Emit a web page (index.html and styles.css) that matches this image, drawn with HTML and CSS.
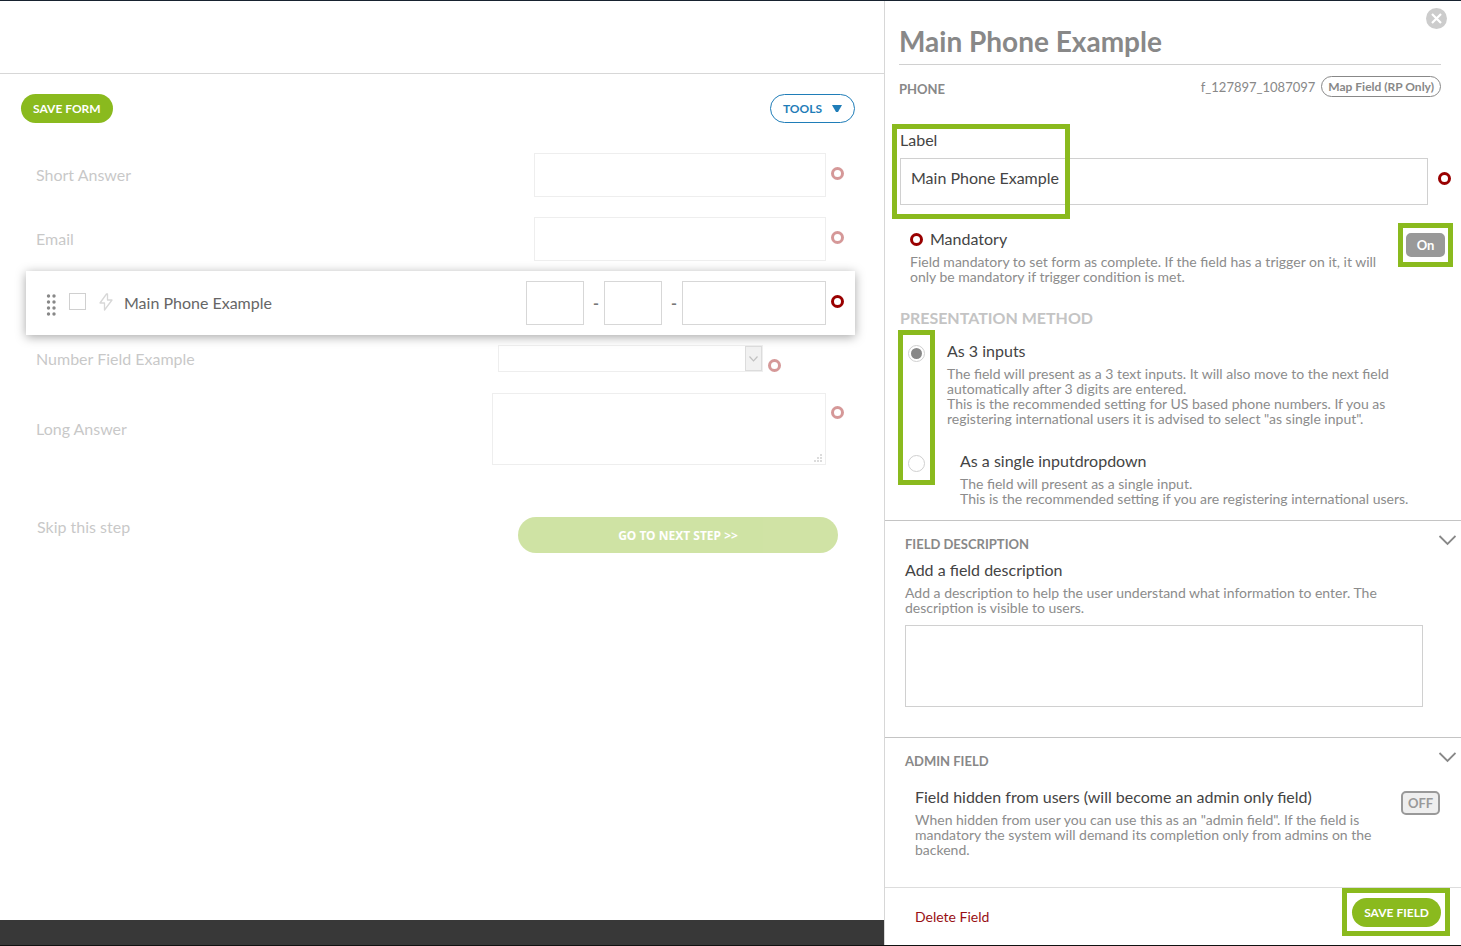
FILE: index.html
```html
<!DOCTYPE html>
<html lang="en">

<head>
    <meta charset="utf-8">
    <title>Form Builder</title>
    <link rel="stylesheet" href="styles.css">
</head>
<body>
    <div class="layout">
        <main class="builder">
            <header class="top-bar"></header>

            <div class="toolbar">
                <button type="button" class="btn-green">SAVE FORM</button>
                <button type="button" class="btn-tools">TOOLS
                    <svg width="10" height="7" viewBox="0 0 10 7"><path d="M0 0h10L6 7H4z" fill="#1f7db8"/></svg>
                </button>
            </div>

            <form class="fields">
                <div class="row faded">
                    <label for="shortAnswer">Short Answer</label>
                    <input type="text" id="shortAnswer" class="box wide">
                    <span class="ring"></span>
                </div>
                <div class="row faded">
                    <label for="email">Email</label>
                    <input type="text" id="email" class="box wide">
                    <span class="ring"></span>
                </div>

                <div class="row selected">
                    <svg class="drag" width="10" height="22" viewBox="0 0 10 22" fill="#888">
                        <circle cx="2.500" cy="2" r="1.700"/><circle cx="8" cy="2" r="1.700"/>
                        <circle cx="2.500" cy="8" r="1.700"/><circle cx="8" cy="8" r="1.700"/>
                        <circle cx="2.500" cy="14" r="1.700"/><circle cx="8" cy="14" r="1.700"/>
                        <circle cx="2.500" cy="20" r="1.700"/><circle cx="8" cy="20" r="1.700"/>
                    </svg>
                    <input type="checkbox" class="pick" aria-label="Select field">
                    <svg class="bolt" width="14" height="18" viewBox="0 0 14 18" fill="none" stroke="#d7d7d7" stroke-width="1.3" stroke-linejoin="round"><path d="M7.500 1 1 10h4.500L5.500 17 13 7H8.500L8.500 1z"/></svg>
                    <label for="phone1">Main Phone Example</label>
                    <input type="text" id="phone1" class="box short">
                    <span class="dash">-</span>
                    <input type="text" class="box short" aria-label="Phone part 2">
                    <span class="dash">-</span>
                    <input type="text" class="box medium" aria-label="Phone part 3">
                    <span class="ring"></span>
                </div>

                <div class="row number-row faded">
                    <label for="numberField">Number Field Example</label>
                    <span class="select-wrap">
                        <select id="numberField"></select>
                        <span class="select-arrow">
                            <svg width="9" height="6" viewBox="0 0 9 6" fill="none" stroke="#666" stroke-width="1.2"><path d="M.5.500 4.500 4.800 8.500.5"/></svg>
                        </span>
                    </span>
                    <span class="ring"></span>
                </div>
                <div class="row long-row faded">
                    <label for="longAnswer">Long Answer</label>
                    <span class="area-wrap">
                        <textarea id="longAnswer" class="box"></textarea>
                        <svg class="grip" width="8" height="8" viewBox="0 0 8 8" fill="#aaa"><path d="M6 0h2v2H6zM3 3h2v2H3zM6 3h2v2H6zM0 6h2v2H0zM3 6h2v2H3zM6 6h2v2H6z"/></svg>
                    </span>
                    <span class="ring"></span>
                </div>

                <div class="step faded">
                    <a href="#" class="skip">Skip this step</a>
                    <button type="button" class="btn-next">GO TO NEXT STEP &gt;&gt;</button>
                </div>
            </form>

            <footer class="bottom-bar"></footer>
        </main>

        <aside class="panel">
            <button type="button" class="close" aria-label="Close">
                <svg width="21" height="21" viewBox="0 0 21 21"><circle cx="10.500" cy="10.500" r="10.500" fill="#ccc"/><path d="M6 6l9 9M15 6l-9 9" stroke="#fff" stroke-width="2.200"/></svg>
            </button>

            <div class="panel-head">
                <h1>Main Phone Example</h1>
                <div class="meta">
                    <span class="type">PHONE</span>
                    <span class="code">f_127897_1087097</span>
                    <button type="button" class="btn-map">Map Field (RP Only)</button>
                </div>
            </div>

            <div class="settings">
                <div class="label-field">
                    <label for="fieldLabel">Label</label>
                    <div class="label-input">
                        <input type="text" id="fieldLabel" value="Main Phone Example">
                        <span class="ring"></span>
                    </div>
                </div>

                <div class="setting">
                    <div class="setting-text">
                        <h3><span class="ring"></span>Mandatory</h3>
                        <p>Field mandatory to set form as complete. If the field has a trigger on it, it will only be mandatory if trigger condition is met.</p>
                    </div>
                    <span class="toggle-wrap"><button type="button" class="toggle on">On</button></span>
                </div>

                <h2 class="method-title">PRESENTATION METHOD</h2>
                <div class="methods">
                    <div class="method">
                        <input type="radio" name="method" id="threeInputs" checked>
                        <div>
                            <label for="threeInputs">As 3 inputs</label>
                            <p>The field will present as a 3 text inputs. It will also move to the next field automatically after 3 digits are entered.<br>
                            This is the recommended setting for US based phone numbers. If you as registering international users it is advised to select "as single input".</p>
                        </div>
                    </div>
                    <div class="method single">
                        <input type="radio" name="method" id="singleInput">
                        <div>
                            <label for="singleInput">As a single inputdropdown</label>
                            <p>The field will present as a single input.<br>
                            This is the recommended setting if you are registering international users.</p>
                        </div>
                    </div>
                </div>
            </div>

            <section class="description">
                <div class="section-head">
                    <h2>FIELD DESCRIPTION</h2>
                    <svg width="18" height="11" viewBox="0 0 18 11" fill="none" stroke="#888" stroke-width="1.800"><path d="M1.500 1l8 8 8-8"/></svg>
                </div>
                <label for="fieldDescription">Add a field description</label>
                <p>Add a description to help the user understand what information to enter. The description is visible to users.</p>
                <textarea id="fieldDescription"></textarea>
            </section>

            <section class="admin">
                <div class="section-head">
                    <h2>ADMIN FIELD</h2>
                    <svg width="18" height="11" viewBox="0 0 18 11" fill="none" stroke="#888" stroke-width="1.800"><path d="M1.500 1l8 8 8-8"/></svg>
                </div>
                <div class="setting">
                    <div class="setting-text">
                        <h3>Field hidden from users (will become an admin only field)</h3>
                        <p>When hidden from user you can use this as an "admin field". If the field is mandatory the system will demand its completion only from admins on the backend.</p>
                    </div>
                    <button type="button" class="toggle">OFF</button>
                </div>
            </section>

            <footer class="panel-foot">
                <a href="#">Delete Field</a>
                <span class="save-wrap"><button type="button" class="btn-green">SAVE FIELD</button></span>
            </footer>
        </aside>
    </div>
</body>
</html>
```
FILE: styles.css
```css
*,
*::before,
*::after {
    box-sizing: border-box;
}

body {
    margin: 0;
    font-family: Lato, "Liberation Sans", sans-serif;
    font-size: 16px;
    line-height: 20px;
    color: #444;
    background: #fff;
}

h1, h2, h3, p {
    margin: 0;
}

input, textarea, select, button {
    margin: 0;
    font-family: inherit;
}

button {
    cursor: pointer;
}

a {
    text-decoration: none;
}

.layout {
    display: grid;
    grid-template-columns: minmax(0, 1fr) 577px;
    min-height: 100vh;
    border-top: 1px solid #17222f;
    border-bottom: 1px solid #111;
}

/* left side */
.builder {
    display: flex;
    flex-direction: column;
}

.top-bar {
    height: 73px;
    border-bottom: 1px solid #d7d7d7;
}

.toolbar {
    display: flex;
    justify-content: space-between;
    padding: 20px 29px 20px 21px;
}

.btn-green {
    height: 29px;
    padding: 0 12px;
    border: none;
    border-radius: 15px;
    background: #8aba1e;
    color: #fff;
    font-size: 12px;
    font-weight: 700;
}

.btn-tools {
    display: flex;
    align-items: center;
    gap: 10px;
    height: 29px;
    padding: 0 12px;
    border: 1px solid #1f7db8;
    border-radius: 15px;
    background: #fff;
    color: #1f7db8;
    font-size: 12px;
    font-weight: 700;
}

.fields {
    margin: 0 29px 0 26px;
}

.row {
    display: flex;
    align-items: center;
    padding: 10px 11px 10px 10px;
    color: #777;
}

.row label {
    flex: 1;
}

.faded {
    opacity: 0.4;
}

.box {
    height: 44px;
    border: 1px solid #d7d7d7;
    background: #fff;
}

.wide {
    width: 292px;
}

.short {
    width: 58px;
}

.medium {
    width: 144px;
}

.ring {
    flex: none;
    width: 13px;
    height: 13px;
    margin-left: 5px;
    border: 3px solid #900;
    border-radius: 50%;
}

.row .ring {
    margin-bottom: 4px;
}

.selected {
    padding-left: 20px;
    background: #fff;
    box-shadow: 0 2px 10px rgba(0, 0, 0, 0.35);
}

.selected label {
    color: #666;
}

.drag {
    margin-top: 4px;
}

.pick {
    appearance: none;
    width: 17px;
    height: 17px;
    margin: 0 13px 4px;
    border: 1px solid #d0d0d0;
}

.bolt {
    margin: 0 11px 2px 0;
}

.dash {
    width: 20px;
    padding-left: 4px;
    text-align: center;
    font-weight: 700;
}

.number-row {
    padding-right: 74px;
    padding-bottom: 11px;
}

.number-row .ring {
    align-self: flex-end;
    margin-bottom: 0;
}

.select-wrap {
    position: relative;
    display: flex;
}

.select-wrap select {
    appearance: none;
    width: 265px;
    height: 27px;
    border: 1px solid #d7d7d7;
    border-radius: 0;
    background: #fff;
}

.select-arrow {
    position: absolute;
    top: 1px;
    right: 1px;
    bottom: 1px;
    display: flex;
    align-items: center;
    justify-content: center;
    width: 17px;
    border: 1px solid #aaa;
    background: #ddd;
    pointer-events: none;
}

.area-wrap {
    position: relative;
    display: flex;
}

.area-wrap textarea {
    width: 334px;
    height: 72px;
    resize: none;
}

.grip {
    position: absolute;
    right: 4px;
    bottom: 3px;
}

.long-row .ring {
    align-self: flex-start;
    margin-top: 13px;
}

.step {
    display: flex;
    justify-content: space-between;
    margin-top: 42px;
    padding: 0 17px 0 11px;
}

.skip {
    color: #777;
}

.btn-next {
    width: 320px;
    height: 36px;
    border: none;
    border-radius: 18px;
    background: #8aba1e;
    color: #fff;
    font-family: "Noto Sans", sans-serif;
    font-size: 12px;
    font-weight: 700;
}

.bottom-bar {
    height: 25px;
    margin-top: auto;
    background: #383838;
}

/* field settings panel */
.panel {
    position: relative;
    display: flex;
    flex-direction: column;
    border-left: 1px solid #d7d7d7;
}

.panel p {
    margin-top: 5px;
    color: #8c8c8c;
    font-size: 14px;
    line-height: 15px;
}

.close {
    position: absolute;
    top: 7px;
    right: 14px;
    display: flex;
    padding: 0;
    border: none;
    background: none;
}

.panel-head {
    padding: 19px 20px 0 14px;
    color: #888;
}

.panel-head h1 {
    padding-bottom: 2px;
    border-bottom: 1px solid #d0d0d0;
    font-size: 28px;
    line-height: 42px;
}

.meta {
    display: flex;
    align-items: flex-end;
    gap: 6px;
    margin-top: 11px;
    font-size: 13px;
}

.type {
    flex: 1;
    font-weight: 700;
    line-height: 15px;
}

.btn-map {
    height: 21px;
    padding: 0 6px;
    border: 1px solid #888;
    border-radius: 11px;
    background: #fff;
    color: #888;
    font-size: 12px;
    font-weight: 700;
}

.settings {
    padding: 33px 20px 14px 15px;
}

.label-field {
    position: relative;
}

/* green frames */
.label-field::after,
.toggle-wrap::after,
.methods::before,
.save-wrap::after {
    content: "";
    position: absolute;
    border: 5px solid #8aba1e;
    pointer-events: none;
}

.label-field::after {
    top: -6px;
    left: -8px;
    width: 178px;
    height: 95px;
}

.label-field label {
    display: block;
}

.label-input {
    display: flex;
    align-items: center;
    margin: 8px -10px 0 0;
}

.label-input input {
    flex: 1;
    height: 47px;
    padding: 0 10px 8px;
    border: 1px solid #d0d0d0;
    color: #444;
    font-size: 16px;
}

.label-input .ring {
    margin: 0 0 6px 10px;
}

.setting {
    display: flex;
    align-items: flex-start;
    justify-content: space-between;
}

.settings .setting {
    margin: 24px -4px 0 10px;
}

.setting-text {
    width: 470px;
}

.setting h3 {
    display: flex;
    align-items: center;
    font-size: 16px;
    font-weight: 400;
}

.setting h3 .ring {
    margin: 0 7px 0 0;
}

.toggle {
    width: 39px;
    height: 24px;
    margin-top: 4px;
    padding: 0;
    border: 2px solid #999;
    border-radius: 5px;
    background: #eee;
    color: #999;
    font-size: 13px;
    font-weight: 700;
}

.on {
    background: #999;
    color: #fff;
}

.toggle-wrap {
    position: relative;
}

.toggle-wrap::after {
    top: -6px;
    right: -8px;
    width: 55px;
    height: 44px;
}

.method-title {
    margin-top: 24px;
    color: #c4c4c4;
    font-size: 16px;
}

.methods {
    position: relative;
    display: flex;
    flex-direction: column;
    gap: 25px;
    margin: 13px -5px 0 8px;
}

.methods::before {
    top: -11px;
    left: -10px;
    width: 37px;
    height: 155px;
}

.method {
    display: flex;
    gap: 22px;
}

.single {
    gap: 35px;
}

.method label {
    display: block;
}

.method input {
    appearance: none;
    flex: none;
    width: 17px;
    height: 17px;
    margin-top: 4px;
    border: 1px solid #d0d0d0;
    border-radius: 50%;
}

.method input:checked {
    background: #888;
    background-clip: content-box;
    padding: 2px;
}

.description,
.admin {
    padding: 13px 5px 30px 20px;
    border-top: 1px solid #c4c4c4;
}

.section-head {
    display: flex;
    justify-content: space-between;
    color: #888;
}

.section-head h2 {
    font-size: 13px;
}

.section-head svg {
    margin-top: 1px;
}

.description label {
    display: block;
    margin-top: 6px;
}

.description p {
    width: 480px;
}

.description textarea {
    display: block;
    width: 518px;
    height: 82px;
    margin-top: 10px;
    border: 1px solid #d0d0d0;
    resize: none;
}

.admin .setting {
    margin: 16px 16px 0 10px;
}

.panel-foot {
    display: flex;
    align-items: flex-start;
    justify-content: space-between;
    height: 58px;
    margin-top: auto;
    padding: 10px 20px 0 30px;
    border-top: 1px solid #ddd;
    font-size: 14px;
    line-height: 38px;
}

.panel-foot a {
    color: #990f14;
}

.save-wrap {
    position: relative;
    display: flex;
}

.save-wrap::after {
    top: -10px;
    right: -9px;
    width: 108px;
    height: 48px;
}
```
